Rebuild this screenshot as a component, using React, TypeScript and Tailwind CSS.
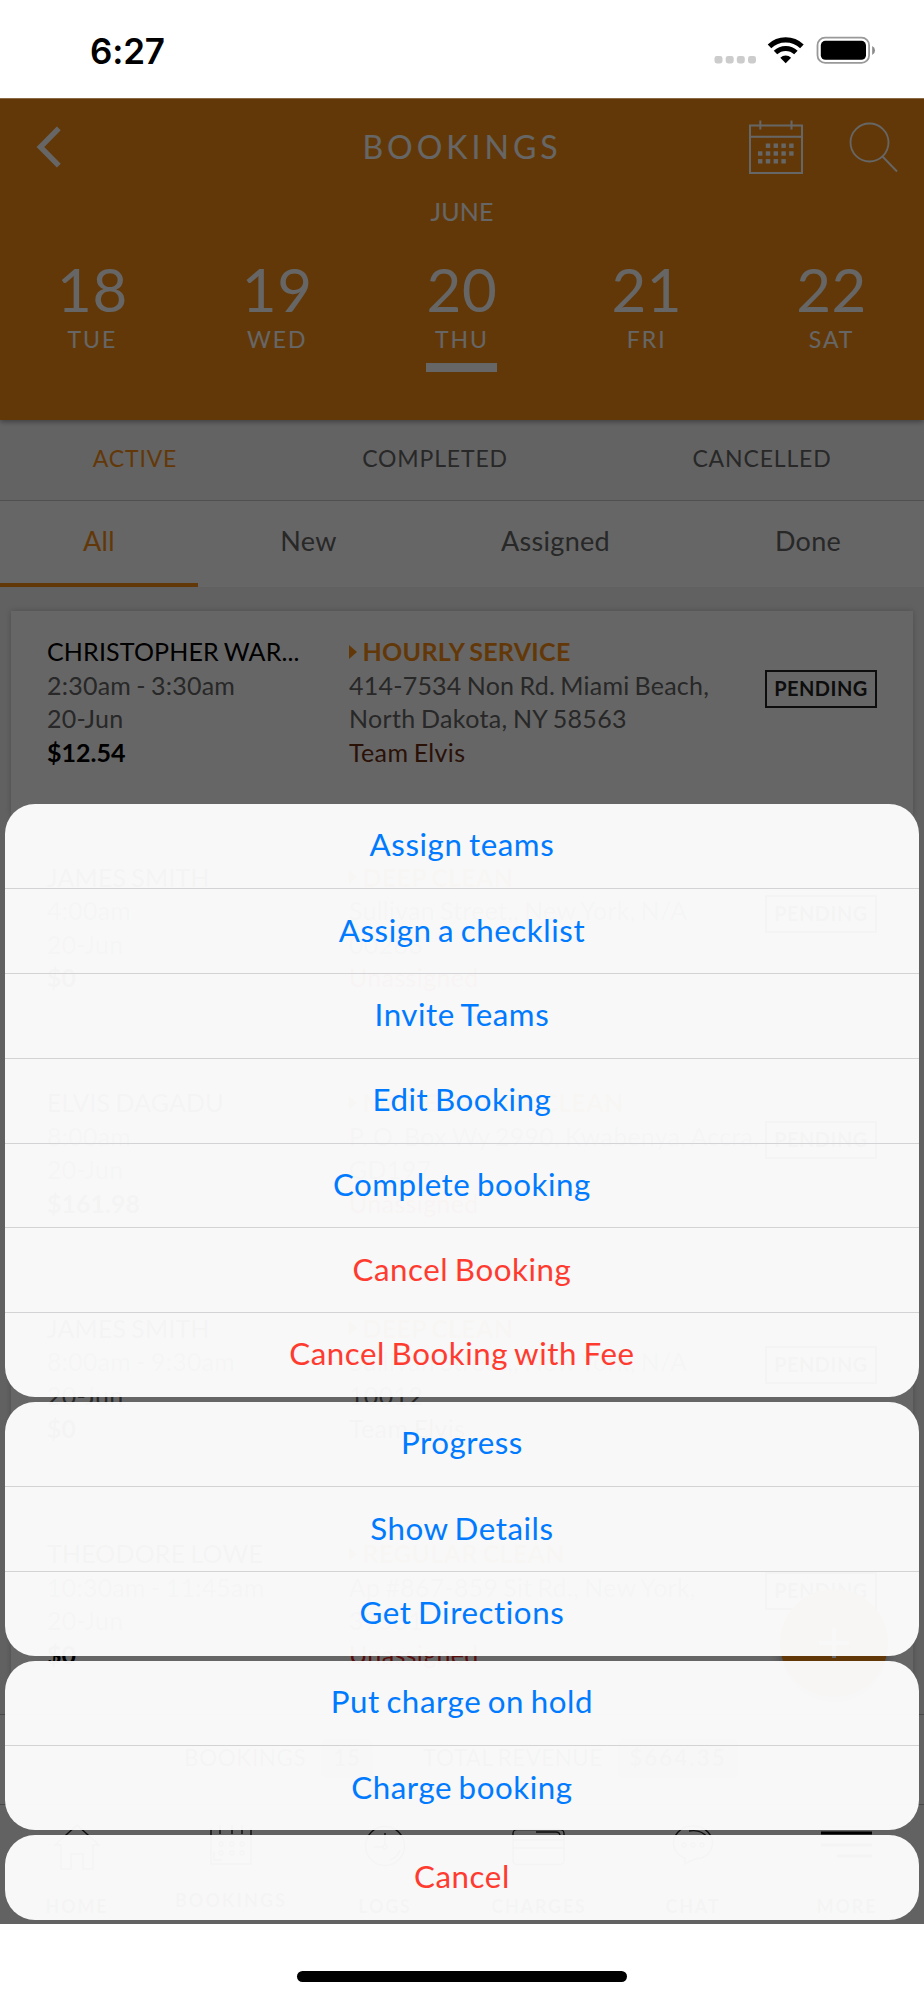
import React from "react";

type Booking = {
  name: string;
  time: string;
  date: string;
  price: string;
  service: string;
  line1: string;
  line2: string;
  team: string;
};

const bookings: Booking[] = [
  { name: "CHRISTOPHER WAR...", time: "2:30am - 3:30am", date: "20-Jun", price: "$12.54", service: "HOURLY SERVICE", line1: "414-7534 Non Rd. Miami Beach,", line2: "North Dakota, NY 58563", team: "Team Elvis" },
  { name: "JAMES SMITH", time: "4:00am", date: "20-Jun", price: "$0", service: "DEEP CLEAN", line1: "Sullivan Street,, New York, N/A", line2: "00283", team: "Unassigned" },
  { name: "ELVIS DAGADU", time: "8:00am", date: "20-Jun", price: "$161.98", service: "MOVE IN/OUT CLEAN", line1: "P. O. Box Wy 2990, Kwabenya, Accra,", line2: "GD197", team: "Unassigned" },
  { name: "JAMES SMITH", time: "8:00am - 9:30am", date: "20-Jun", price: "$0", service: "DEEP CLEAN", line1: "Sullivan Street,, New York, N/A", line2: "10012", team: "Team Elvis" },
  { name: "THEODORE LOWE", time: "10:30am - 11:45am", date: "20-Jun", price: "$0", service: "REGULAR CLEAN", line1: "Ap #867-859 Sit Rd., New York,", line2: "39531", team: "Unassigned" },
];

const days = [
  { num: "18", name: "TUE" },
  { num: "19", name: "WED" },
  { num: "20", name: "THU" },
  { num: "21", name: "FRI" },
  { num: "22", name: "SAT" },
];

type Action = { label: string; danger?: boolean };

const sheet: Action[][] = [
  [
    { label: "Assign teams" },
    { label: "Assign a checklist" },
    { label: "Invite Teams" },
    { label: "Edit Booking" },
    { label: "Complete booking" },
    { label: "Cancel Booking", danger: true },
    { label: "Cancel Booking with Fee", danger: true },
  ],
  [{ label: "Progress" }, { label: "Show Details" }, { label: "Get Directions" }],
  [{ label: "Put charge on hold" }, { label: "Charge booking" }],
  [{ label: "Cancel", danger: true }],
];

function StatusBar() {
  return (
    <div className="flex h-[98px] items-start justify-between bg-white pt-[36px] pr-[47px] pl-[90px]">
      <div className="-mt-[6px] font-['Inter'] text-[35px] leading-[42px] font-semibold tracking-[-0.2px] text-black">6:27</div>
      <svg width="163" height="30" viewBox="0 0 163 30" fill="none">
        <g fill="#cccccc">
          <rect x="0.5" y="20" width="8" height="7.5" rx="2.4" />
          <rect x="11.7" y="20" width="8" height="7.5" rx="2.4" />
          <rect x="22.8" y="20" width="8" height="7.5" rx="2.4" />
          <rect x="34" y="20" width="8" height="7.5" rx="2.4" />
        </g>
        <g transform="translate(53.5 1)">
          <path d="M2 9.3 A23.5 23.5 0 0 1 34.4 9.3" stroke="#000" strokeWidth="5.2" />
          <path d="M8 15.5 A14.8 14.8 0 0 1 28.4 15.5" stroke="#000" strokeWidth="5" />
          <path d="M12.8 20.7 A8 8 0 0 1 23.6 20.7 L18.2 26.2 Z" fill="#000" />
        </g>
        <rect x="103.5" y="1.7" width="51.6" height="25.2" rx="7.6" stroke="#999" strokeWidth="1.8" />
        <rect x="106.8" y="4.8" width="45.2" height="19" rx="4.6" fill="#000" />
        <path d="M158.2 10 a5 5 0 0 1 0 9 Z" fill="#8a8a8a" />
      </svg>
    </div>
  );
}

function CalendarIcon() {
  const dots: [number, number][] = [];
  [0, 1, 2].forEach((r) =>
    [0, 1, 2, 3, 4].forEach((c) => {
      if ((r === 0 && c === 0) || (r === 2 && c === 4)) return;
      dots.push([9 + c * 7.8, 23.5 + r * 7.8]);
    })
  );
  return (
    <svg width="54" height="54" viewBox="0 0 54 54" fill="none" stroke="#fff" strokeWidth="2">
      <rect x="1" y="5.5" width="52" height="47.5" />
      <path d="M1 16.8H53M11.3 0.5V9.5M42.5 0.5V9.5" />
      {dots.map(([x, y]) => (
        <rect key={`${x}-${y}`} x={x} y={y} width="4.4" height="4.4" fill="#fff" stroke="none" />
      ))}
    </svg>
  );
}

function Header() {
  return (
    <div className="relative z-10 h-[322px] bg-[#f78c14] text-white shadow-[0_2px_5px_rgba(0,0,0,0.35)]">
      <div className="grid h-[97px] grid-cols-[1fr_auto_1fr] items-center">
        <svg className="ml-[36px]" width="26" height="42" viewBox="0 0 26 42" fill="none" stroke="#fff" strokeWidth="5.4">
          <path d="M22.8 2.4 L4.4 21 L22.8 39.6" />
        </svg>
        <div className="text-[32px] leading-[40px] tracking-[4px]">BOOKINGS</div>
        <div className="flex items-center justify-end pt-[1px] pr-[25px]">
          <CalendarIcon />
          <svg className="ml-[46px]" width="50" height="52" viewBox="0 0 50 52" fill="none" stroke="#fff" strokeWidth="1.8">
            <circle cx="20.5" cy="21.5" r="19" />
            <path d="M33.5 35.5 L48 50.5" />
          </svg>
        </div>
      </div>
      <div className="text-center text-[25px] leading-[32px] tracking-[0.1px]">JUNE</div>
      <div className="mt-[29px] grid grid-cols-5">
        {days.map((d) => (
          <div key={d.num} className="flex flex-col items-center">
            <div className="text-[60px] leading-[66px] tracking-[0.6px]">{d.num}</div>
            <div className="mt-[2px] text-[23px] leading-[30px] tracking-[2px]">{d.name}</div>
            <div className={d.name === "THU" ? "mt-[9px] h-[9px] w-[71px] bg-white" : "h-[9px]"} />
          </div>
        ))}
      </div>
    </div>
  );
}

function Tabs() {
  return (
    <>
      <div className="flex h-[81px] border-b border-[#c8c8c8] bg-[#f8f8f8] pb-[3px] text-[23px] tracking-[0.85px] text-[#646464]">
        <div className="flex w-[270px] items-center justify-center text-[#f78c14]">ACTIVE</div>
        <div className="flex w-[330px] items-center justify-center">COMPLETED</div>
        <div className="flex w-[324px] items-center justify-center">CANCELLED</div>
      </div>
      <div className="flex h-[86px] bg-white text-[27px] tracking-[0.3px] text-[#646464]">
        <div className="flex w-[198px] items-center justify-center border-b-4 border-[#f78c14] pb-[2px] text-[#f78c14]">All</div>
        <div className="flex w-[221px] items-center justify-center pb-[6px]">New</div>
        <div className="flex w-[273px] items-center justify-center pb-[6px]">Assigned</div>
        <div className="flex w-[232px] items-center justify-center pb-[6px]">Done</div>
      </div>
    </>
  );
}

function Card({ b }: { b: Booking }) {
  return (
    <div className="flex h-[205px] shrink-0 bg-white pt-[24px] pl-[36px] text-[25px] leading-[33.5px] tracking-[0.22px] [word-spacing:-1.4px] whitespace-nowrap text-[#646464] shadow-[0_0_6px_rgba(0,0,0,0.2)]">
      <div className="w-[302px]">
        <div className="tracking-[0.15px] text-black">{b.name}</div>
        <div>{b.time}</div>
        <div>{b.date}</div>
        <div className="font-bold tracking-[0px] text-black">{b.price}</div>
      </div>
      <div className="w-[416px]">
        <div className="flex items-center font-bold tracking-[0.3px] text-[#f78c14]">
          <svg className="mr-[5.5px]" width="8" height="14" viewBox="0 0 8 14">
            <path d="M0 0L8 7L0 14Z" fill="#f78c14" />
          </svg>
          {b.service}
        </div>
        <div>{b.line1}</div>
        <div className="tracking-[0.35px]">{b.line2}</div>
        <div className={b.team === "Unassigned" ? "tracking-[0.35px] text-[#e02020]" : "tracking-[0.35px] text-[#6a2c10]"}>{b.team}</div>
      </div>
      <div className="mt-[34.5px] flex h-[38px] w-[112px] items-center justify-center border-2 border-[#222] text-[20px] font-bold tracking-[0.45px] text-[#222]">
        PENDING
      </div>
    </div>
  );
}

const navIcons: Record<string, React.ReactNode> = {
  HOME: <path d="M1 23L23 3L45 23H39V47H29V32H17V47H7V23Z" />,
  BOOKINGS: (
    <>
      <path d="M3 6V42H43V6M12 3V12M24 3V12M34 3V12" />
      <circle cx="13" cy="22" r="2" />
      <circle cx="24" cy="22" r="2" />
      <circle cx="34" cy="22" r="2" />
      <circle cx="13" cy="31" r="2" />
      <circle cx="24" cy="31" r="2" />
      <circle cx="34" cy="31" r="2" />
      <path d="M6 30V38H14" />
    </>
  ),
  LOGS: (
    <>
      <circle cx="23" cy="24" r="19.5" />
      <circle cx="23" cy="25" r="2" />
      <path d="M23 11V23M12 25H21M38 28A16 16 0 0 1 28 38" />
    </>
  ),
  CHARGES: (
    <>
      <rect x="-3" y="7.5" width="51" height="35" rx="4" />
      <path d="M-3 18H48M-3 26H48M20 10H40Q44 10 44 14" />
    </>
  ),
  CHAT: (
    <>
      <path d="M14 36A19.5 17 0 1 1 32 36Q24 36 15 42V36Z" />
      <circle cx="14" cy="23" r="2" />
      <circle cx="23" cy="23" r="2" />
      <circle cx="32" cy="23" r="2" />
      <path d="M19 9Q31 7 37 15" />
    </>
  ),
  MORE: <path d="M-3 11H48M-3 23H48M13 34H48" strokeWidth="3" stroke="#000" />,
};

function BottomBars() {
  return (
    <div className="absolute inset-x-0 bottom-0">
      <div className="flex h-[90px] items-center border-t border-[#b4b4b4] bg-[#f8f8f8] pb-[3px] pl-[184px] text-[22.5px] tracking-[0.6px] [word-spacing:-1px] whitespace-nowrap text-[#333]">
        <div className="w-[137px]">BOOKINGS</div>
        <div className="flex h-[39px] w-[52px] items-center justify-center rounded-[5px] bg-[#cfcfcf] font-bold">15</div>
        <div className="ml-[50px] w-[195px] tracking-[0.4px]">TOTAL REVENUE</div>
        <div className="flex h-[39px] w-[120px] items-center justify-center rounded-[5px] bg-[#cfcfcf] font-bold tracking-[2px]">$664.35</div>
      </div>
      <div className="grid h-[120px] grid-cols-6 border-t border-[#b4b4b4] bg-[#f4f4f4]">
        {Object.keys(navIcons).map((k) => (
          <div key={k} className="flex flex-col items-center pt-[17px]">
            <svg width="46" height="48" viewBox="0 0 46 48" fill="none" stroke="#222" strokeWidth="1.4" className="overflow-visible">
              {navIcons[k]}
            </svg>
            <div
              className={
                k === "BOOKINGS"
                  ? "mt-[18px] text-[18px] leading-[24px] font-bold tracking-[2.1px] text-[#333]"
                  : "mt-[24px] text-[18px] leading-[24px] font-bold tracking-[1.8px] text-[#333]"
              }
            >
              {k}
            </div>
          </div>
        ))}
      </div>
    </div>
  );
}

function ActionSheet() {
  return (
    <div className="absolute inset-x-0 bottom-0 flex flex-col gap-[4.75px] pr-[4.75px] pb-[4.5px] pl-[4.6px]">
      {sheet.map((group, i) => (
        <div key={i} className="overflow-hidden rounded-[30px] bg-white/[0.955]">
          {group.map((a, j) => (
            <div
              key={a.label}
              className={[
                "flex h-[84.75px] items-center justify-center pb-[2px] text-[31.3px] tracking-[0.55px] [word-spacing:-2px]",
                a.danger ? "text-[#ff3b30]" : "text-[#007aff]",
                j > 0 ? "border-t border-[#d3d3d5]" : "",
              ].join(" ")}
            >
              {a.label}
            </div>
          ))}
        </div>
      ))}
    </div>
  );
}

export default function App() {
  return (
    <div className="h-[2000px] w-[924px] overflow-hidden bg-white font-['Lato',sans-serif]">
      <StatusBar />
      <div className="relative h-[1826px] overflow-hidden bg-[#f2f2f2]">
        <Header />
        <Tabs />
        <div className="flex flex-col gap-[20.5px] pt-[24px] pr-[11px] pl-[11px]">
          {bookings.map((b, i) => (
            <Card key={i} b={b} />
          ))}
        </div>
        <BottomBars />
        <div className="absolute top-[1491px] left-[780px] flex size-[108px] items-center justify-center rounded-full bg-[#f78c14] shadow-[0_6px_12px_rgba(0,0,0,0.3)]">
          <svg width="30" height="30" viewBox="0 0 30 30" stroke="#fff" strokeWidth="4">
            <path d="M15 0V30M0 15H30" />
          </svg>
        </div>
        <div className="absolute inset-0 z-20 border-t border-white/25 bg-black/60" />
        <div className="absolute inset-0 z-30">
          <ActionSheet />
        </div>
      </div>
      <div className="flex h-[76px] justify-center pt-[47px]">
        <div className="h-[11px] w-[330px] rounded-full bg-black" />
      </div>
    </div>
  );
}
